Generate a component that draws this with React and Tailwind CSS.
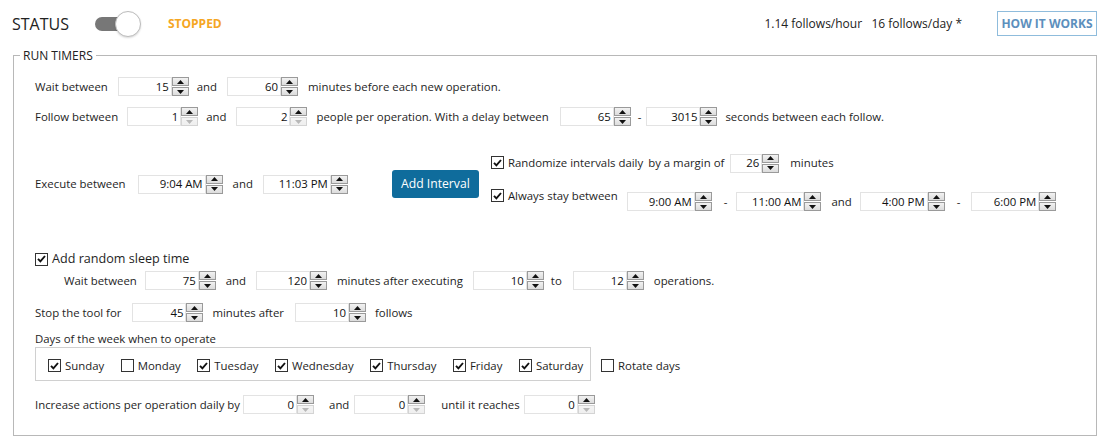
import React from "react";

function Arrow({ up, disabled }) {
  return (
    <svg width="7" height="4" viewBox="0 0 7 4" className="block">
      {up ? (
        <path d="M0 4 L3.5 0 L7 4 Z" fill={disabled ? "#b8b8b8" : "#111"} />
      ) : (
        <path d="M0 0 L3.5 4 L7 0 Z" fill={disabled ? "#b8b8b8" : "#111"} />
      )}
    </svg>
  );
}

function SpinBtn({ up, disabled }) {
  return (
    <div
      className={
        "flex h-[9px] w-[17px] items-center justify-center border bg-gradient-to-b " +
        (disabled
          ? "border-[#d4d4d4] from-[#f4f4f4] to-[#efefef]"
          : "border-[#9a9a9a] from-[#f2f2f2] to-[#dcdcdc]")
      }
    >
      <Arrow up={up} disabled={disabled} />
    </div>
  );
}

function Spin({ value, w = "w-[54px]", downOff = false }) {
  return (
    <div className="flex h-[19px] items-stretch">
      <div
        className={
          "flex items-center justify-end border border-[#e3e3e3] bg-white pr-[2px] text-[11.4px] text-[#111] " +
          w
        }
      >
        {value}
      </div>
      <div className="flex flex-col justify-between">
        <SpinBtn up />
        <SpinBtn disabled={downOff} />
      </div>
    </div>
  );
}

function Check({ checked, label, big = false }) {
  return (
    <label className="flex items-center gap-[4px]">
      <span className="flex h-[13px] w-[13px] items-center justify-center border border-[#333] bg-white">
        {checked && (
          <svg width="9" height="8" viewBox="0 0 9 8">
            <path d="M1 3.8 L3.4 6.4 L8 1" fill="none" stroke="#111" strokeWidth="1.9" />
          </svg>
        )}
      </span>
      <span className={big ? "text-[12.6px]" : "text-[11.4px]"}>{label}</span>
    </label>
  );
}

export default function App() {
  return (
    <div className="h-[439px] w-[1105px] bg-white font-['Segoe_UI','Open_Sans',sans-serif] text-[11.4px] text-[#1e1e1e]">
      {/* header */}
      <div className="flex h-[47px] items-center pl-[12px] pr-[8px]">
        <span className="text-[16px] text-[#222]">STATUS</span>
        <div className="relative ml-[26px] h-[26px] w-[46px]">
          <div className="absolute left-0 top-[6px] h-[14px] w-[30px] rounded-full bg-[#777]" />
          <div className="absolute left-[20px] top-0 h-[26px] w-[26px] rounded-full border border-[#bcbcbc] bg-white shadow-[0_1px_2px_rgba(0,0,0,0.15)]" />
        </div>
        <span className="ml-[27px] text-[12px] font-bold text-[#f5a623]">STOPPED</span>
        <div className="flex-1" />
        <span className="text-[12px] text-[#222]">
          1.14 follows/hour&nbsp;&nbsp;&nbsp;16 follows/day *
        </span>
        <div className="ml-[35px] flex h-[25px] w-[100px] items-center justify-center border border-[#8fbcdc] text-[12px] font-bold text-[#5c8fbd]">
          HOW IT WORKS
        </div>
      </div>

      {/* run timers group */}
      <div className="relative ml-[13px] mr-[8px] mt-[8px] h-[381px] border border-[#b8b8b8]">
        <span className="absolute -top-[9px] left-[6px] bg-white px-[3px] text-[12px] text-[#222]">
          RUN TIMERS
        </span>

        <div className="pl-[21px] pt-[21px]">
          {/* wait between */}
          <div className="flex h-[19px] items-center">
            <span>Wait between</span>
            <div className="ml-[10px]"><Spin value="15" /></div>
            <span className="ml-[8px]">and</span>
            <div className="ml-[10px]"><Spin value="60" /></div>
            <span className="ml-[10px]">minutes before each new operation.</span>
          </div>

          {/* follow between */}
          <div className="mt-[11px] flex h-[19px] items-center">
            <span>Follow between</span>
            <div className="ml-[9px]"><Spin value="1" downOff /></div>
            <span className="ml-[8px]">and</span>
            <div className="ml-[10px]"><Spin value="2" downOff /></div>
            <span className="ml-[9px]">people per operation. With a delay between</span>
            <div className="ml-[11px]"><Spin value="65" /></div>
            <span className="ml-[7px]">-</span>
            <div className="ml-[5px]"><Spin value="3015" /></div>
            <span className="ml-[8px]">seconds between each follow.</span>
          </div>

          {/* execute window + intervals */}
          <div className="mt-[27px] flex items-center">
            <div className="mt-[3px] flex items-center">
              <span>Execute between</span>
              <div className="ml-[12px]"><Spin value="9:04 AM" w="w-[68px]" /></div>
              <span className="ml-[10px]">and</span>
              <div className="ml-[10px]"><Spin value="11:03 PM" w="w-[68px]" /></div>
            </div>
            <div className="ml-[44px] mt-[3px] flex h-[28px] w-[87px] items-center justify-center rounded-[3px] bg-[#0f6c9c] text-[12.2px] text-white">
              Add Interval
            </div>
            <div className="ml-[12px] flex flex-col">
              <div className="flex h-[20px] items-center">
                <Check checked label="Randomize intervals daily" />
                <span className="ml-[5px]">by a margin of</span>
                <div className="ml-[6px]"><Spin value="26" w="w-[32px]" /></div>
                <span className="ml-[11px]">minutes</span>
              </div>
              <div className="mt-[19px] flex h-[20px] items-start">
                <div className="-mt-[5px]">
                  <Check checked label="Always stay between" />
                </div>
                <div className="ml-[9px] flex items-center">
                  <Spin value="9:00 AM" w="w-[68px]" />
                  <span className="ml-[12px]">-</span>
                  <div className="ml-[9px]"><Spin value="11:00 AM" w="w-[68px]" /></div>
                  <span className="ml-[10px]">and</span>
                  <div className="ml-[8px]"><Spin value="4:00 PM" w="w-[68px]" /></div>
                  <span className="ml-[12px]">-</span>
                  <div className="ml-[11px]"><Spin value="6:00 PM" w="w-[68px]" /></div>
                </div>
              </div>
            </div>
          </div>

          {/* random sleep */}
          <div className="mt-[39px] flex h-[16px] items-center">
            <Check checked big label="Add random sleep time" />
          </div>
          <div className="mt-[4px] flex h-[19px] items-center pl-[29px]">
            <span>Wait between</span>
            <div className="ml-[8px]"><Spin value="75" /></div>
            <span className="ml-[10px]">and</span>
            <div className="ml-[10px]"><Spin value="120" /></div>
            <span className="ml-[10px]">minutes after executing</span>
            <div className="ml-[10px]"><Spin value="10" /></div>
            <span className="ml-[7px]">to</span>
            <div className="ml-[11px]"><Spin value="12" /></div>
            <span className="ml-[10px]">operations.</span>
          </div>

          {/* stop the tool */}
          <div className="mt-[13px] flex h-[19px] items-center">
            <span>Stop the tool for</span>
            <div className="ml-[11px]"><Spin value="45" /></div>
            <span className="ml-[9px]">minutes after</span>
            <div className="ml-[11px]"><Spin value="10" /></div>
            <span className="ml-[9px]">follows</span>
          </div>

          {/* days */}
          <div className="mt-[9px] h-[16px] leading-[16px]">Days of the week when to operate</div>
          <div className="flex items-center">
            <div className="flex h-[34px] w-[556px] items-center gap-[16.5px] border border-[#d0d0d0] pl-[12px] pt-[4px]">
              <Check checked label="Sunday" />
              <Check label="Monday" />
              <Check checked label="Tuesday" />
              <Check checked label="Wednesday" />
              <Check checked label="Thursday" />
              <Check checked label="Friday" />
              <Check checked label="Saturday" />
            </div>
            <div className="ml-[10px] pt-[4px]">
              <Check label="Rotate days" />
            </div>
          </div>

          {/* increase */}
          <div className="mt-[14px] flex h-[19px] items-center">
            <span>Increase actions per operation daily by</span>
            <div className="ml-[3px]"><Spin value="0" downOff /></div>
            <span className="ml-[15px]">and</span>
            <div className="ml-[5px]"><Spin value="0" downOff /></div>
            <span className="ml-[16px]">until it reaches</span>
            <div className="ml-[4px]"><Spin value="0" downOff /></div>
          </div>
        </div>
      </div>
    </div>
  );
}
